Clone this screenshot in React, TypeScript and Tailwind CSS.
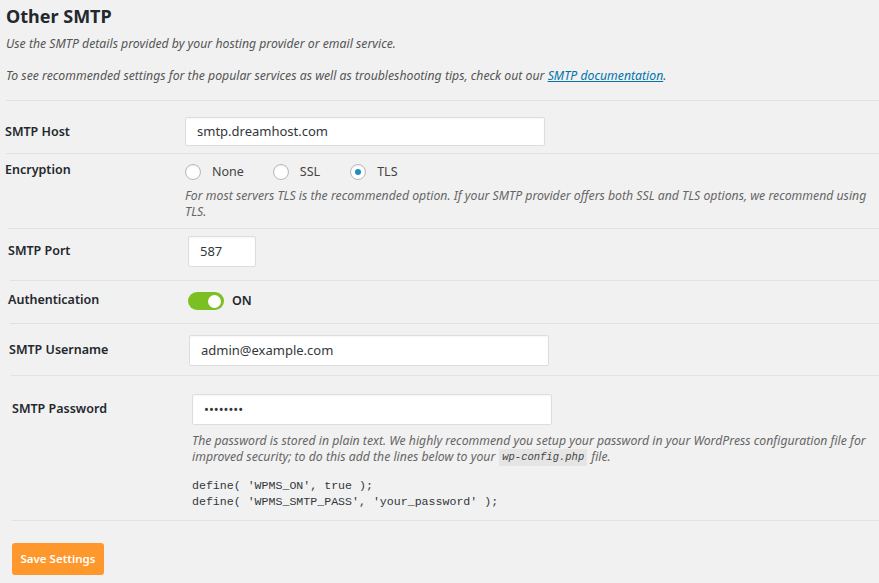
import React from "react";

const font = "font-['Noto_Sans',sans-serif]";
const mono = "font-['Liberation_Mono',monospace]";

function Radio({ checked, label }: { checked?: boolean; label: string }) {
  return (
    <label className="flex items-center">
      <span className="flex h-4 w-4 items-center justify-center rounded-full border border-[#b4b9be] bg-white shadow-[inset_0_1px_2px_rgba(0,0,0,0.07)]">
        {checked && <span className="h-[6px] w-[6px] rounded-full bg-[#1e8cbe]" />}
      </span>
      <span className="ml-[11px] text-[12.5px] text-[#444]">{label}</span>
    </label>
  );
}

function TextInput({ value, width, height = "h-[31px]" }: { value: string; width: string; height?: string }) {
  return (
    <div className={`${width} ${height} flex items-center rounded-[2px] border border-[#ddd] bg-white px-[11px] text-[13px] text-[#32373c] shadow-[inset_0_1px_2px_rgba(0,0,0,0.04)]`}>
      {value}
    </div>
  );
}

export default function App() {
  return (
    <div className={`min-h-[583px] w-[879px] bg-[#f1f1f1] text-[#23282d] ${font}`}>
      <div className="pl-[6px] pt-[3px]">
        <h2 className="text-[18px] font-bold leading-[26px] text-[#23282d]">Other SMTP</h2>
        <p className="mt-[5px] text-[12.25px] italic leading-[20px] text-[#555]">
          Use the SMTP details provided by your hosting provider or email service.
        </p>
        <p className="mt-[12px] text-[12.25px] italic leading-[20px] text-[#555]">
          To see recommended settings for the popular services as well as troubleshooting tips, check out our{" "}
          <a className="text-[#0073aa] underline">SMTP documentation</a>.
        </p>
      </div>

      <div className="ml-[6px] mt-[14px] border-t border-[#e1e1e1]">
        {/* SMTP Host */}
        <div className="-ml-[1px] flex h-[52px] pt-[16px]">
          <div className="w-[180px] pt-[6px] text-[12.5px] font-semibold">SMTP Host</div>
          <TextInput value="smtp.dreamhost.com" width="w-[360px]" height="h-[29px]" />
        </div>
      </div>

      <div className="ml-[6px] border-t border-[#e1e1e1]">
        {/* Encryption */}
        <div className="-ml-[1px] flex h-[74px] pt-[7px]">
          <div className="w-[180px] text-[12.5px] font-semibold">Encryption</div>
          <div>
            <div className="flex h-[22px] items-center">
              <Radio label="None" />
              <span className="w-[29px]" />
              <Radio label="SSL" />
              <span className="w-[30px]" />
              <Radio checked label="TLS" />
            </div>
            <p className="mt-[5px] w-[690px] text-[12.25px] italic leading-[16px] text-[#666]">
              For most servers TLS is the recommended option. If your SMTP provider offers both SSL and TLS options, we recommend using TLS.
            </p>
          </div>
        </div>
      </div>

      <div className="ml-[8px] border-t border-[#e1e1e1]">
        {/* SMTP Port */}
        <div className="flex h-[51px] pt-[7px]">
          <div className="w-[180px] pt-[6px] text-[12.5px] font-semibold">SMTP Port</div>
          <TextInput value="587" width="w-[68px]" />
        </div>
      </div>

      <div className="ml-[10px] border-t border-[#e1e1e1]">
        {/* Authentication */}
        <div className="-ml-[2px] flex h-[42px] items-start pt-[9px]">
          <div className="w-[180px] text-[12.5px] font-semibold leading-[19px]">Authentication</div>
          <div className="mt-[2px] flex h-[18px] items-center">
            <span className="flex h-[18px] w-[36px] items-center justify-end rounded-full bg-[#7cbf22] pr-[3px]">
              <span className="h-[13px] w-[13px] rounded-full bg-white" />
            </span>
            <span className="ml-[8px] text-[12.5px] font-semibold">ON</span>
          </div>
        </div>
      </div>

      <div className="ml-[10px] border-t border-[#e1e1e1]">
        {/* SMTP Username */}
        <div className="-ml-[1px] flex h-[51px] pt-[11px]">
          <div className="w-[180px] pt-[6px] text-[12.5px] font-semibold">SMTP Username</div>
          <TextInput value="admin@example.com" width="w-[360px]" />
        </div>
      </div>

      <div className="ml-[11px] border-t border-[#e1e1e1]">
        {/* SMTP Password */}
        <div className="ml-[1px] flex h-[144px] pt-[18px]">
          <div className="w-[180px] pt-[6px] text-[12.5px] font-semibold">SMTP Password</div>
          <div>
            <TextInput value="••••••••" width="w-[360px]" />
            <p className="mt-[8px] w-[680px] text-[12.25px] italic leading-[16px] text-[#666]">
              The password is stored in plain text. We highly recommend you setup your password in your WordPress configuration file for improved security; to do this add the lines below to your
              <code className={`mx-[4px] inline-block bg-[#e5e5e5] px-[3px] align-top text-[10.5px] leading-[17px] text-[#444] ${mono}`}>wp-config.php</code>
              file.
            </p>
            <pre className={`mt-[12px] text-[11.6px] leading-[16px] text-[#32373c] ${mono}`}>
              {"define( 'WPMS_ON', true );\ndefine( 'WPMS_SMTP_PASS', 'your_password' );"}
            </pre>
          </div>
        </div>
      </div>

      <div className="ml-[12px] border-t border-[#e1e1e1] pt-[22px]">
        <button className="h-[32px] w-[92px] rounded-[3px] bg-[#ff982c] text-[11.5px] font-semibold text-white">
          Save Settings
        </button>
      </div>
    </div>
  );
}
